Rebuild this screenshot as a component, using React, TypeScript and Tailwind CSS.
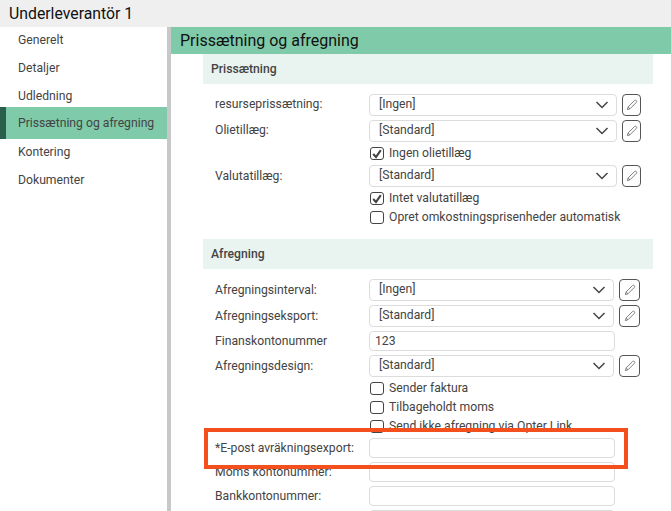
import React from "react";

const Pencil = () => (
  <svg width="12" height="12" viewBox="0 0 13 13" fill="none" stroke="#666" strokeWidth="0.9" strokeLinejoin="round">
    <path d="M1.5 11.5 L2.3 8.6 L9.2 1.7 C9.8 1.1 10.6 1.1 11.2 1.7 C11.8 2.3 11.8 3.1 11.2 3.7 L4.3 10.6 Z" />
    <path d="M2.3 8.6 L4.3 10.6" />
  </svg>
);

const Chevron = () => (
  <svg width="14" height="8" viewBox="0 0 14 8" fill="none" stroke="#444" strokeWidth="1.5">
    <path d="M1.5 1 L7 6.5 L12.5 1" />
  </svg>
);

const Label = ({ children }: { children: React.ReactNode }) => (
  <div className="w-[154px] shrink-0 pl-[1px] whitespace-nowrap text-[12.2px] leading-[20px]">{children}</div>
);

const Select = ({ label, value, wide, low }: { label: string; value: string; wide?: boolean; low?: boolean }) => (
  <div className="flex h-[22px] items-start">
    <div className={`w-[155px] shrink-0 pl-[1px] whitespace-nowrap text-[12.2px] leading-[20px] ${low ? "pt-[1px]" : ""}`}>{label}</div>
    <div className={`flex h-[22px] items-center justify-between rounded-[4px] border border-[#dcdcdc] pl-[9px] pr-[7px] ${wide ? "w-[248px]" : "w-[245px]"}`}>
      <span className="relative top-[-1px] text-[12.2px]">{value}</span>
      <Chevron />
    </div>
    <div className={`flex h-[22px] items-center justify-center rounded-[4px] border border-[#555] ${wide ? "ml-[5px] w-[19px]" : "ml-[5px] w-[21px]"}`}>
      <Pencil />
    </div>
  </div>
);

const Check = ({ label, checked }: { label: string; checked?: boolean }) => (
  <div className="flex h-[15px] items-center pl-[156px]">
    <div className="flex h-[13px] w-[14px] items-center justify-center rounded-[3px] border border-[#444]">
      {checked && (
        <svg width="10" height="10" viewBox="0 0 10 10" fill="none" stroke="#444" strokeWidth="2.1">
          <path d="M1.2 5 L4 8 L8.8 1.2" />
        </svg>
      )}
    </div>
    <span className="ml-[5px] whitespace-nowrap text-[12.2px]">{label}</span>
  </div>
);

const Input = ({ label, value }: { label: string; value?: string }) => (
  <div className="flex h-[20px] items-start">
    <Label>{label}</Label>
    <div className="ml-[1px] flex h-[20px] w-[246px] items-center rounded-[4px] border border-[#dcdcdc] pl-[5px] text-[12.2px]">{value}</div>
  </div>
);

const top = ["Generelt", "Detaljer", "Udledning"];
const bottom = ["Kontering", "Dokumenter"];

export default function App() {
  return (
    <div className="relative h-[511px] w-[671px] overflow-hidden bg-white font-['Roboto',sans-serif] text-[#444]">
      <div className="flex h-[27px] items-center bg-[#efefef] pl-[9px] text-[15.8px] text-[#111]">Underleverantör 1</div>
      <div className="flex h-[484px]">
        <nav className="w-[167px] shrink-0">
          <div className="-mt-[1px]">
            {top.map((t) => (
              <div key={t} className="flex h-[28px] items-center pl-[18px] text-[12.2px]">{t}</div>
            ))}
          </div>
          <div className="-mt-[3px] -mb-[1px] flex h-[32px] items-center border-l-[6px] border-[#2a5f4c] bg-[#7fcaa9] pl-[12px] text-[12.2px]">Prissætning og afregning</div>
          {bottom.map((t) => (
            <div key={t} className="flex h-[28px] items-center pl-[18px] text-[12.2px]">{t}</div>
          ))}
        </nav>
        <div className="w-[4px] shrink-0 bg-[#c8c8c8]" />
        <main className="flex-1">
          <div className="flex h-[27px] items-center bg-[#7fcaa9] pl-[9px] text-[16px] text-[#111]">Prissætning og afregning</div>
          <div className="ml-[32px] w-[450px]">
            <div className="flex h-[30px] items-center bg-[#e9f3ef] pl-[8px] text-[12.2px] font-medium">Prissætning</div>
            <div className="pl-[11px] pt-[10px]">
              <Select wide label="resurseprissætning:" value="[Ingen]" />
              <div className="mt-[4px]"><Select wide label="Olietillæg:" value="[Standard]" /></div>
              <div className="mt-[4px]"><Check checked label="Ingen olietillæg" /></div>
              <div className="mt-[4px]"><Select wide low label="Valutatillæg:" value="[Standard]" /></div>
              <div className="mt-[4px]"><Check checked label="Intet valutatillæg" /></div>
              <div className="mt-[4px]"><Check label="Opret omkostningsprisenheder automatisk" /></div>
            </div>
            <div className="mt-[14px] flex h-[30px] items-center bg-[#e9f3ef] pl-[8px] text-[12.2px] font-medium">Afregning</div>
            <div className="pl-[11px] pt-[10px]">
              <Select low label="Afregningsinterval:" value="[Ingen]" />
              <div className="mt-[4px]"><Select low label="Afregningseksport:" value="[Standard]" /></div>
              <div className="mt-[4px]"><Input label="Finanskontonummer" value="123" /></div>
              <div className="mt-[4px]"><Select low label="Afregningsdesign:" value="[Standard]" /></div>
              <div className="mt-[4px]"><Check label="Sender faktura" /></div>
              <div className="mt-[4px]"><Check label="Tilbageholdt moms" /></div>
              <div className="mt-[4px]"><Check label="Send ikke afregning via Opter Link" /></div>
              <div className="mt-[4px]"><Input label="*E-post avräkningsexport:" /></div>
              <div className="mt-[4px]"><Input label="Moms kontonummer:" /></div>
              <div className="mt-[4px]"><Input label="Bankkontonummer:" /></div>
              <div className="mt-[4px]"><Input label="" /></div>
            </div>
          </div>
        </main>
      </div>
      <div className="absolute left-[204px] top-[428px] h-[41px] w-[424px] border-[4px] border-[#f4501e]" />
    </div>
  );
}
